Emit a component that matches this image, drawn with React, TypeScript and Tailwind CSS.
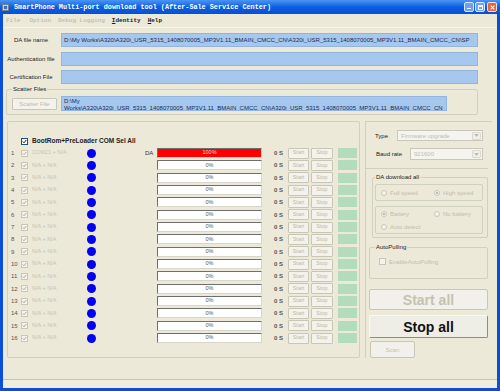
import React from "react";

const path1 =
  "D:\\My Works\\A320\\A320i_USR_5315_1408070005_MP3V1.11_BMAIN_CMCC_CN\\A320i_USR_5315_1408070005_MP3V1.11_BMAIN_CMCC_CN\\SP";
const scatterLine2 =
  "Works\\A320\\A320i_USR_5315_1408070005_MP3V1.11_BMAIN_CMCC_CN\\A320i_USR_5315_1408070005_MP3V1.11_BMAIN_CMCC_CN";

const Check = ({ on = true, disabled = false }: { on?: boolean; disabled?: boolean }) => (
  <span
    className={`flex h-[7px] w-[7px] shrink-0 items-center justify-center border ${
      disabled ? "border-[#c9c7ba] bg-[#f4f3ee]" : "border-[#1c5180] bg-white"
    }`}
  >
    {on && (
      <svg viewBox="0 0 7 7" className="h-[5px] w-[5px]">
        <path
          d="M1 3.4 L2.8 5.3 L6 1.4"
          fill="none"
          stroke={disabled ? "#aca899" : "#222"}
          strokeWidth="1.4"
        />
      </svg>
    )}
  </span>
);

const Radio = ({ on = false }: { on?: boolean }) => (
  <span className="flex h-[6px] w-[6px] shrink-0 items-center justify-center rounded-full border border-[#c9c7ba] bg-[#f4f3ee]">
    {on && <span className="h-[2px] w-[2px] rounded-full bg-[#aca899]" />}
  </span>
);

const Group = ({
  label,
  labelLeft = "left-[4px]",
  className,
  children,
}: {
  label?: string;
  labelLeft?: string;
  className: string;
  children?: React.ReactNode;
}) => (
  <div className={`relative rounded-[2px] border border-[#d0d0bf] ${className}`}>
    {label && (
      <span
        className={`absolute -top-[4px] ${labelLeft} bg-[#ece9d8] px-[1px] text-[6px] leading-[7px] text-[#222]`}
      >
        {label}
      </span>
    )}
    {children}
  </div>
);

const MiniButton = ({ label, className }: { label: string; className: string }) => (
  <span
    className={`flex h-[11px] shrink-0 items-center justify-center rounded-[1px] border border-[#c9c6b6] bg-[#f3f2ec] text-[5.5px] leading-none text-[#bdbaa8] ${className}`}
  >
    {label}
  </span>
);

const Combo = ({ value, className }: { value: string; className: string }) => (
  <div className={`flex items-center border border-[#c9c7ba] bg-[#f5f4ee] ${className}`}>
    <span className="flex-1 pl-[3px] text-[6px] leading-none text-[#c0bdae]">{value}</span>
    <span className="mr-[1px] flex h-[8px] w-[9px] items-center justify-center rounded-[1px] border border-[#dcdacd] bg-[#f0efe8]">
      <svg viewBox="0 0 5 3" className="h-[3px] w-[5px]">
        <path d="M0 0 L5 0 L2.5 3 Z" fill="#c0bdae" />
      </svg>
    </span>
  </div>
);

const FileRow = ({ label, value, className }: { label: string; value?: string; className: string }) => (
  <div className={`flex h-[14px] items-center ${className}`}>
    <span className="w-[56px] text-center text-[6px] leading-none text-[#222]">{label}</span>
    <div className="ml-[2px] flex h-[14px] w-[417px] items-center overflow-hidden border border-[#93b4de] bg-[#a6c8ee]">
      {value && (
        <span className="whitespace-nowrap pl-[2px] text-[6px] leading-none text-[#1b2a55]">{value}</span>
      )}
    </div>
  </div>
);

export default function App() {
  const rows = Array.from({ length: 16 }, (_, i) => i);

  return (
    <div className="flex h-[391px] w-[500px] flex-col bg-[#0b4fd8] font-['Liberation_Sans',Arial,sans-serif]">
      {/* title bar */}
      <div className="flex h-[14px] shrink-0 items-center bg-gradient-to-b from-[#4a94f4] via-[#0c5ee2] to-[#0750d2] pl-[2px] pr-[3px]">
        <svg viewBox="0 0 8 8" className="h-[7px] w-[7px]">
          <rect x="0.5" y="0.5" width="7" height="7" fill="#e8e8e8" stroke="#7a7a7a" />
          <rect x="2" y="2" width="4" height="4" fill="#3a6fd0" />
        </svg>
        <span className="ml-[5px] whitespace-nowrap font-['Liberation_Mono',monospace] text-[6.8px] font-bold leading-none text-white">
          SmartPhone Multi-port download tool (After-Sale Service Center)
        </span>
        <div className="ml-auto flex gap-[1px]">
          <span className="flex h-[10px] w-[10px] items-end justify-center rounded-[2px] border border-[#dde8ff] bg-[#6d9ff2] pb-[2px]">
            <span className="h-[1px] w-[4px] bg-white" />
          </span>
          <span className="flex h-[10px] w-[10px] items-center justify-center rounded-[2px] border border-[#dde8ff] bg-[#6d9ff2]">
            <span className="h-[5px] w-[5px] border border-t-2 border-[#eef3ff]" />
          </span>
          <span className="ml-[1px] flex h-[10px] w-[10px] items-center justify-center rounded-[2px] border border-[#f3e0d6] bg-[#e8643a]">
            <svg viewBox="0 0 6 6" className="h-[5px] w-[5px]">
              <path d="M0.8 0.8 L5.2 5.2 M5.2 0.8 L0.8 5.2" stroke="white" strokeWidth="1.3" />
            </svg>
          </span>
        </div>
      </div>

      {/* window body */}
      <div className="mx-[3px] mb-[3px] flex flex-1 flex-col bg-[#ece9d8]">
        {/* menu */}
        <div className="flex h-[14px] shrink-0 items-center gap-[7px] border-b border-[#f5f4ee] pl-[3px] font-['Liberation_Mono',monospace] text-[6px] font-bold leading-none">
          <span className="text-[#c6c3b3]">File</span>
          <span className="ml-[2px] text-[#c6c3b3]">Option</span>
          <span className="text-[#c6c3b3]">Debug Logging</span>
          <span className="text-[#222]">
            <span className="underline">I</span>dentity
          </span>
          <span className="text-[#222]">
            <span className="underline">H</span>elp
          </span>
        </div>

        <FileRow label="DA file name" value={path1} className="mt-[5px]" />
        <FileRow label="Authentication file" className="mt-[5px]" />
        <FileRow label="Certification File" className="mt-[4px]" />

        {/* scatter */}
        <Group label="Scatter Files" labelLeft="left-[5px]" className="ml-[3px] mt-[5px] flex h-[26px] w-[472px] shrink-0 items-start pt-[7px]">
          <MiniButton label="Scatter File" className="ml-[5px] mt-[1px] h-[12px] w-[45px] text-[6px]" />
          <div className="ml-[4px] h-[15px] w-[386px] -mt-[1px] overflow-hidden border border-[#93b4de] bg-[#a6c8ee] pl-[2px] pt-[1px] text-[6px] leading-[6.5px] text-[#1b2a55]">
            <div>D:\My</div>
            <div className="whitespace-nowrap">{scatterLine2}</div>
          </div>
        </Group>

        {/* main */}
        <div className="mt-[6px] flex h-[237px] shrink-0">
          {/* port list */}
          <Group className="ml-[4px] h-[237px] w-[353px]">
            <div className="ml-[13px] mt-[15px] flex h-[8px] items-center">
              <Check />
              <span className="ml-[4px] whitespace-nowrap text-[6.5px] font-bold leading-none text-[#222]">
                BootRom+PreLoader COM Sel All
              </span>
            </div>
            <div className="mt-[2px] flex flex-col">
              {rows.map((i) => (
                <div key={i} className="flex h-[12.33px] items-center pl-[3px]">
                  <span className="w-[10px] text-[6px] leading-none text-[#555]">{i + 1}</span>
                  <Check disabled />
                  <span className="ml-[4px] w-[55px] whitespace-nowrap text-[5.5px] leading-none text-[#c6c3b3]">
                    {i === 0 ? "COM21 + N/A" : "N/A + N/A"}
                  </span>
                  <span className="h-[9px] w-[9px] shrink-0 rounded-full bg-[#0000f6]" />
                  <span className="ml-[49px] w-[12px] text-[6px] leading-none text-[#333]">{i === 0 ? "DA" : ""}</span>
                  <div
                    className={`flex h-[10px] w-[105px] shrink-0 items-center justify-center border border-[#6e6e6e] border-b-[#d8d6c8] border-r-[#d8d6c8] text-[5.5px] leading-none ${
                      i === 0 ? "bg-[#ff0000] text-[#ffd0d0]" : "bg-white text-[#555]"
                    }`}
                  >
                    {i === 0 ? "100%" : "0%"}
                  </div>
                  <span className="ml-[12px] w-[14px] text-[6px] font-bold leading-none text-[#555]">0 S</span>
                  <MiniButton label="Start" className="w-[21px]" />
                  <MiniButton label="Stop" className="ml-[2px] w-[22px]" />
                  <span className="ml-[5px] h-[10px] w-[19px] shrink-0 bg-[#b3dcbd]" />
                </div>
              ))}
            </div>
          </Group>

          {/* right panel */}
          <div className="ml-[5px] flex h-[237px] w-[127px] flex-col border-l border-t border-[#d0d0bf] pt-[1px]">
            <div className="mt-[7px] flex h-[11px] items-center">
              <span className="ml-[9px] w-[22px] text-[6px] leading-none text-[#222]">Type</span>
              <Combo value="Firmware upgrade" className="h-[11px] w-[86px]" />
            </div>
            <div className="mt-[7px] flex h-[12px] items-center">
              <span className="ml-[10px] w-[34px] text-[6px] leading-none text-[#222]">Baud rate</span>
              <Combo value="921600" className="h-[12px] w-[73px]" />
            </div>
            <div className="mt-[8px] h-[1px] w-[122px] bg-[#d0d0bf]" />

            <Group label="DA download all" labelLeft="left-[2px]" className="ml-[6px] mt-[8px] h-[61px] w-[116px] shrink-0">
              <div className="ml-[2px] mt-[6px] flex h-[17px] w-[108px] items-center rounded-[2px] border border-[#d0d0bf] text-[6px] leading-none text-[#c0bdae]">
                <span className="ml-[5px] flex w-[53px] items-center gap-[3px]">
                  <Radio />
                  Full speed
                </span>
                <span className="flex items-center gap-[3px]">
                  <Radio on />
                  High speed
                </span>
              </div>
              <div className="ml-[2px] mt-[5px] flex h-[28px] w-[108px] flex-col justify-center gap-[7px] rounded-[2px] border border-[#d0d0bf] text-[6px] leading-none text-[#c0bdae]">
                <div className="flex">
                  <span className="ml-[5px] flex w-[53px] items-center gap-[3px]">
                    <Radio on />
                    Battery
                  </span>
                  <span className="flex items-center gap-[3px]">
                    <Radio />
                    No battery
                  </span>
                </div>
                <span className="ml-[5px] flex items-center gap-[3px]">
                  <Radio />
                  Auto detect
                </span>
              </div>
            </Group>

            <Group label="AutoPulling" labelLeft="left-[5px]" className="ml-[3px] mt-[9px] flex h-[32px] w-[119px] shrink-0 items-start pt-[10px]">
              <span className="ml-[9px] flex items-center gap-[3px] text-[6px] leading-none text-[#c0bdae]">
                <Check on={false} disabled />
                EnableAutoPulling
              </span>
            </Group>

            <button className="ml-[3px] mt-[10px] flex h-[21px] w-[119px] shrink-0 items-center justify-center rounded-[2px] border border-[#c9c6b6] bg-[#f1f0ea] text-[14px] font-bold leading-none text-[#c5c2b2]">
              Start all
            </button>
            <button className="ml-[3px] mt-[5px] flex h-[23px] w-[119px] shrink-0 items-center justify-center rounded-[2px] border border-[#8f8c80] border-l-[#f8f8f4] border-t-[#f8f8f4] bg-[#efeee6] text-[14px] font-bold leading-none text-[#111]">
              Stop all
            </button>
            <button className="ml-[4px] mt-[3px] flex h-[17px] w-[45px] shrink-0 items-center justify-center rounded-[2px] border border-[#c9c6b6] bg-[#f1f0ea] text-[6px] leading-none text-[#c5c2b2]">
              Scan
            </button>
          </div>
        </div>

        <div className="flex-1" />
        {/* status bar */}
        <div className="h-[9px] shrink-0 border-t border-[#c5c2b2] bg-[#efedde]" />
      </div>
    </div>
  );
}
